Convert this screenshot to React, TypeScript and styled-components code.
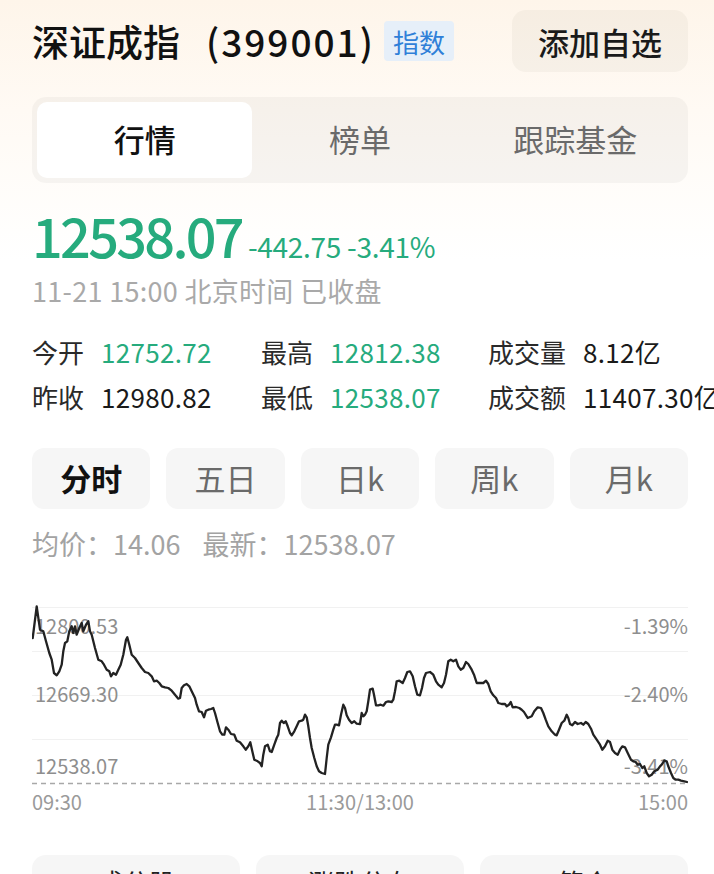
import React from 'react';
import styled, { createGlobalStyle } from 'styled-components';

const GREEN = '#26ab7d';

const GlobalStyle = createGlobalStyle`
  html, body {
    margin: 0;
    padding: 0;
    background: #fff;
  }
  body {
    font-family: 'Noto Sans CJK SC', 'Noto Sans', sans-serif;
    color: #1a1a1a;
    overflow: hidden;
  }
`;

const Page = styled.div`
  width: 714px;
  height: 874px;
  overflow: hidden;
  box-sizing: border-box;
  padding: 10px 26px 0 32px;
  background: linear-gradient(180deg, #fef5ea 0%, #fffaf4 110px, #ffffff 260px);
`;

// --- Шапка --- //
const Header = styled.div`
  display: flex;
  align-items: center;
  justify-content: space-between;
  height: 62px;
`;

const TitleGroup = styled.div`
  display: flex;
  align-items: center;
  gap: 9px;
`;

const Title = styled.h1`
  margin: 0;
  font-size: 37px;
  font-weight: 500;
  line-height: 1;
  color: #111;
  white-space: nowrap;
`;

const Code = styled.span`
  margin-left: 26px;
  letter-spacing: 2px;
`;

const Badge = styled.span`
  display: inline-flex;
  align-items: center;
  height: 40px;
  padding: 0 9px;
  border-radius: 4px;
  background: #e6eff9;
  color: #2f7fd8;
  font-size: 26px;
`;

const AddButton = styled.button`
  width: 176px;
  height: 62px;
  border: none;
  border-radius: 14px;
  background: rgba(60, 40, 20, 0.04);
  font-family: inherit;
  font-size: 31px;
  font-weight: 500;
  color: #1a1a1a;
`;

// --- Вкладки --- //
const Tabs = styled.div`
  margin-top: 25px;
  height: 86px;
  box-sizing: border-box;
  padding: 5px;
  border-radius: 14px;
  background: rgba(0, 0, 0, 0.035);
  display: grid;
  grid-template-columns: repeat(3, 1fr);
`;

const Tab = styled.div<{ $active?: boolean }>`
  display: flex;
  align-items: center;
  justify-content: center;
  padding-bottom: 4px;
  border-radius: 10px;
  font-size: 31px;
  background: ${p => (p.$active ? '#fff' : 'transparent')};
  color: ${p => (p.$active ? '#111' : '#6a6a6a')};
  font-weight: ${p => (p.$active ? 500 : 400)};
`;

// --- Цена --- //
const PriceRow = styled.div`
  margin-top: 24px;
  height: 56px;
  display: flex;
  align-items: baseline;
  gap: 6px;
  color: ${GREEN};
`;

const Price = styled.span`
  font-size: 54px;
  font-weight: 500;
  line-height: 56px;
  letter-spacing: -2.7px;
`;

const Change = styled.span`
  font-size: 28px;
  letter-spacing: -0.3px;
`;

const Timestamp = styled.div`
  margin-top: 11px;
  font-size: 27px;
  line-height: 34px;
  letter-spacing: 0.3px;
  color: #a9a9a9;
`;

const StatsGrid = styled.div`
  margin-top: 21px;
  display: grid;
  grid-template-columns: 229px 227px auto;
  grid-auto-rows: 45px;
`;

const Stat = styled.div`
  display: flex;
  align-items: center;
  gap: 17px;
  font-size: 26px;
  white-space: nowrap;
`;

const StatLabel = styled.span`
  color: #2a2a2a;
`;

const StatValue = styled.span<{ $color: string }>`
  color: ${p => p.$color};
  letter-spacing: 0.3px;
`;

// --- Периоды --- //
const Periods = styled.div`
  margin-top: 29px;
  height: 61px;
  display: grid;
  grid-template-columns: repeat(5, 1fr);
  gap: 16px;
`;

const Period = styled.div<{ $active?: boolean }>`
  display: flex;
  align-items: center;
  justify-content: center;
  padding-bottom: 3px;
  border-radius: 12px;
  background: #f6f6f6;
  font-size: 31px;
  color: ${p => (p.$active ? '#111' : '#6a6a6a')};
  font-weight: ${p => (p.$active ? 600 : 400)};
`;

const AvgRow = styled.div`
  margin-top: 18px;
  display: flex;
  gap: 22px;
  font-size: 27px;
  line-height: 34px;
  color: #a3a3a3;
`;

// --- График --- //
const ChartSvg = styled.svg`
  display: block;
  margin-top: 37px;
`;

const AxisRow = styled.div`
  display: flex;
  justify-content: space-between;
  font-size: 20px;
  line-height: 24px;
  color: #9a9a9a;
`;

const Cards = styled.div`
  margin-top: 41px;
  display: grid;
  grid-template-columns: repeat(3, 1fr);
  gap: 16px;
`;

const Card = styled.div`
  height: 90px;
  box-sizing: border-box;
  padding-top: 12px;
  border-radius: 14px;
  background: #f6f6f6;
  text-align: center;
  font-size: 26px;
  line-height: 30px;
  color: #222;
`;

// точки линии в координатах страницы
const RAW_POINTS: [number, number][] = [
  [32.7, 638], [36.7, 606.3], [40, 629.7], [43.3, 631.3], [46, 641.3], [49.3, 653], [51.7, 659.7], [54, 673],
  [56.7, 675.3], [59.3, 671.3], [61.7, 664.7], [63.3, 651.3], [65, 643], [67.3, 641.3], [69.3, 631.3],
  [71.7, 626.3], [73.3, 633], [75, 626.3], [76.7, 634.7], [79.3, 628], [81.7, 623], [83.3, 631.3], [86, 624.7],
  [88.3, 621.3], [90, 631.3], [91.7, 634.7], [95, 648], [98.3, 659.7], [101.7, 661.3], [104, 664.7],
  [106.7, 669.7], [109.3, 671.3], [111, 676.3], [113.3, 673], [116, 674.7], [118.3, 669.7], [120.7, 664.7],
  [123.3, 654.7], [126, 639.7], [127.3, 637.3], [129.3, 644.7], [131.7, 654.7], [135, 658], [138.3, 663],
  [141.7, 668], [145, 672], [148.3, 673], [151.7, 676.3], [154, 681.3], [156.7, 680.7], [159.3, 683],
  [161.7, 686.3], [165, 687.3], [168.3, 688], [171.7, 690.7], [175, 694.7], [178.3, 698.7], [180, 698],
  [181.7, 688], [184, 685.3], [186.7, 684], [189.3, 686.3], [191.7, 691.3], [195, 698],
  [196.7, 704.7], [199, 711.3], [201.7, 712], [204, 717.3], [206, 710.7], [208.3, 709.7], [211, 709],
  [213.3, 708], [215, 713], [217.7, 723], [220, 731.3], [222.3, 734.7], [224.3, 734.7], [226, 727.3],
  [228.3, 729.7], [231, 734], [234.3, 734.7], [236.7, 740.7], [240, 742.3], [243.3, 746.3], [245.7, 749.7],
  [248.3, 746.3], [250.3, 742.3], [252.3, 751.3], [254.3, 759.7], [257.7, 761.3], [260, 763], [261.7, 766.3],
  [263.3, 754.7], [265, 746.3], [267.7, 744.7], [270, 751.3], [271.7, 752], [274.3, 744.7], [276.7, 738],
  [278.3, 734.7], [280, 723], [281.7, 720.7], [283.7, 723], [285.7, 721.3], [287.7, 726.3], [290, 733],
  [291.7, 735.3], [294.3, 731.3], [296.7, 726.3], [299, 721.3], [301.7, 720.7], [303.3, 719.7], [305, 714.7],
  [306.7, 717.3], [308.3, 726.3], [310, 738], [311.7, 748], [314.3, 758], [316.7, 766.3], [319, 771.3],
  [321.7, 773], [325, 774], [326.7, 758], [328.3, 744.7], [331, 737.3], [333.3, 729.7], [335, 724.7],
  [336.7, 724.7], [339, 725.3], [341, 714.7], [343.3, 704.7], [345, 708], [346.7, 715.3], [349, 719.7],
  [351.7, 723], [354.3, 721.3], [356.7, 723.7], [360, 724],
  [361.7, 713], [363.3, 716.3], [365, 714.7], [366.7, 711.3], [368.3, 701.3], [370, 689.7], [372.7, 688.7],
  [374, 694.7], [376, 705.3], [378.3, 705.3], [380.7, 704.7], [383.3, 705.7], [386, 702], [388.3, 701.3],
  [391.7, 702], [393.3, 699.7], [395, 691.3], [396.7, 681.3], [399.3, 680.7], [402.7, 683], [405, 678],
  [407.3, 672], [410, 671.3], [412.7, 676.3], [415, 686.3], [417.3, 694.7], [420, 695.3], [422, 688],
  [424, 678], [426, 673], [430, 672], [433.3, 674.7], [436, 681.3], [438.3, 684.7], [441.7, 687.3], [444, 683],
  [446, 674.7], [448.3, 661.3], [450.7, 659.7], [453.3, 661.3], [456, 659.7], [458.3, 666.3], [460.7, 669.7],
  [463.3, 668], [466, 662], [468.3, 664], [471.7, 669.7], [474, 674.7], [476.7, 683], [480, 683], [483.3, 683],
  [486, 680.7], [488.3, 684], [490.7, 691.3], [493.3, 695.3], [496, 698], [498.3, 703], [501.7, 704],
  [505, 704], [506.7, 706.3], [509, 704.7], [510.7, 702], [512.7, 707.3], [516, 707], [519.3, 708],
  [521.7, 709.7], [524, 712], [526.7, 716.3],
  [527.7, 718], [531.7, 716.3], [534.3, 711.3], [537.7, 707.3], [541, 708], [543.3, 713], [545.7, 719.7],
  [548.3, 726.3], [551.7, 731.3], [555, 734.7], [556.7, 735.3], [559, 729.7], [561.7, 723], [564.3, 720.7],
  [566.7, 714.7], [568.3, 718], [570, 724], [572.3, 725.3], [575, 722], [577.7, 724], [581, 723],
  [583.3, 724.7], [585.7, 722], [588.3, 724], [591, 728.7], [593.3, 734.7], [596.7, 739.7], [600, 744.7],
  [602.3, 749.7], [605, 746.3], [607.7, 740.7], [610, 742], [612.3, 749.7], [615, 753], [617.7, 754.7],
  [620, 749.7], [622.3, 746.3], [625, 747.3], [627.7, 753], [631, 759.7], [633.3, 761.3], [635.7, 762],
  [637.7, 764.7], [640, 764], [642.3, 768], [644.3, 766.3], [646.7, 773], [649, 776.3], [651.7, 774.7],
  [654.3, 771.3], [657.7, 769.7], [660, 766.3], [661.7, 764.7], [664.3, 760.7], [666.7, 761.3],
  [668.3, 766.3], [671, 773], [673.3, 778], [675.7, 779.7], [678.3, 779.7], [681, 780.7], [684.3, 781.3],
  [687, 782],
];

const CHART_W = 656;
const CHART_H = 192;
const linePoints = RAW_POINTS.map(([x, y]) => `${(x - 32).toFixed(1)},${(y - 598).toFixed(1)}`).join(' ');
const GRID_Y = [9, 53, 97, 141];

const labelStyle = {
  fontFamily: "'Noto Sans CJK SC', sans-serif",
  fontSize: 20,
  fill: '#8e8e8e',
};

const stats = [
  { label: '今开', value: '12752.72', color: GREEN },
  { label: '最高', value: '12812.38', color: GREEN },
  { label: '成交量', value: '8.12亿', color: '#1a1a1a' },
  { label: '昨收', value: '12980.82', color: '#1a1a1a' },
  { label: '最低', value: '12538.07', color: GREEN },
  { label: '成交额', value: '11407.30亿', color: '#1a1a1a' },
];

const periods = ['分时', '五日', '日k', '周k', '月k'];

const App: React.FC = () => {
  return (
    <>
      <GlobalStyle />
      <Page>
        <Header>
          <TitleGroup>
            <Title>
              深证成指<Code>(399001)</Code>
            </Title>
            <Badge>指数</Badge>
          </TitleGroup>
          <AddButton>添加自选</AddButton>
        </Header>

        <Tabs>
          <Tab $active>行情</Tab>
          <Tab>榜单</Tab>
          <Tab>跟踪基金</Tab>
        </Tabs>

        <PriceRow>
          <Price>12538.07</Price>
          <Change>-442.75 -3.41%</Change>
        </PriceRow>
        <Timestamp>11-21 15:00 北京时间 已收盘</Timestamp>

        <StatsGrid>
          {stats.map(s => (
            <Stat key={s.label}>
              <StatLabel>{s.label}</StatLabel>
              <StatValue $color={s.color}>{s.value}</StatValue>
            </Stat>
          ))}
        </StatsGrid>

        <Periods>
          {periods.map((p, i) => (
            <Period key={p} $active={i === 0}>{p}</Period>
          ))}
        </Periods>

        <AvgRow>
          <span>均价：14.06</span>
          <span>最新：12538.07</span>
        </AvgRow>

        {/* Дневной график */}
        <ChartSvg width={CHART_W} height={CHART_H} viewBox={`0 0 ${CHART_W} ${CHART_H}`}>
          {GRID_Y.map(y => (
            <line key={y} x1={0} x2={CHART_W} y1={y + 0.5} y2={y + 0.5} stroke="#f1f1f1" strokeWidth={1} />
          ))}
          <line x1={0} x2={CHART_W} y1={185.5} y2={185.5} stroke="#a8a8a8" strokeWidth={1.5} strokeDasharray="5 4" />
          <text x={3} y={36} style={labelStyle}>12800.53</text>
          <text x={3} y={104} style={labelStyle}>12669.30</text>
          <text x={3} y={176} style={labelStyle}>12538.07</text>
          <text x={CHART_W} y={36} textAnchor="end" style={labelStyle}>-1.39%</text>
          <text x={CHART_W} y={104} textAnchor="end" style={labelStyle}>-2.40%</text>
          <text x={CHART_W} y={176} textAnchor="end" style={labelStyle}>-3.41%</text>
          <polyline points={linePoints} fill="none" stroke="#222" strokeWidth={2.3} strokeLinejoin="round" strokeLinecap="round" />
        </ChartSvg>
        <AxisRow>
          <span>09:30</span>
          <span>11:30/13:00</span>
          <span>15:00</span>
        </AxisRow>

        <Cards>
          <Card>成分股</Card>
          <Card>涨跌分布</Card>
          <Card>简介</Card>
        </Cards>
      </Page>
    </>
  );
};

export default App;
